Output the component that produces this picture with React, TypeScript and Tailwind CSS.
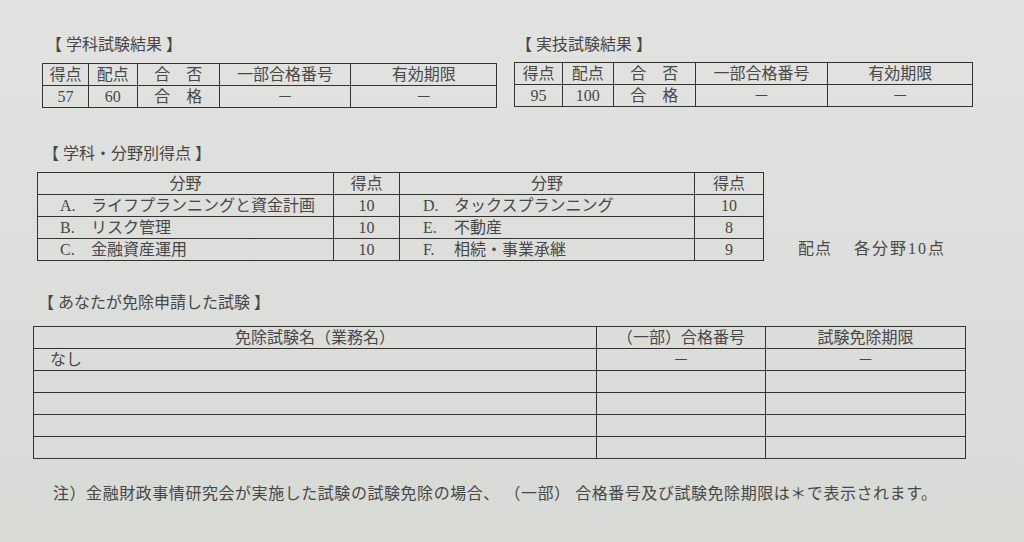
import React from 'react';

const LINE = 'border-[1.5px] border-[#333331]';

type ResultRow = { score: string; max: string };

function ResultTable({ widths, row }: { widths: number[]; row: ResultRow }) {
  const heads = ['得点', '配点', '合\u3000否', '一部合格番号', '有効期限'];
  const cells = [row.score, row.max, '合\u3000格', '－', '－'];
  return (
    <table className={`table-fixed border-collapse ${LINE}`}>
      <colgroup>
        {widths.map((w, i) => (
          <col key={i} style={{ width: w }} />
        ))}
      </colgroup>
      <tbody>
        <tr className="h-[22px]">
          {heads.map((h) => (
            <td key={h} className={`${LINE} p-0 text-center leading-none`}>{h}</td>
          ))}
        </tr>
        <tr className="h-[22px]">
          {cells.map((c, i) => (
            <td key={i} className={`${LINE} p-0 text-center leading-none`}>{c}</td>
          ))}
        </tr>
      </tbody>
    </table>
  );
}

const FIELDS = [
  ['A.', 'ライフプランニングと資金計画', '10', 'D.', 'タックスプランニング', '10'],
  ['B.', 'リスク管理', '10', 'E.', '不動産', '8'],
  ['C.', '金融資産運用', '10', 'F.', '相続・事業承継', '9'],
];

export default function App() {
  return (
    <div className="w-[1024px] h-[542px] overflow-hidden bg-gradient-to-b from-[#e2e3e0] to-[#d8dad6] text-[16px] text-[#474747] font-['Liberation_Serif','Noto_Sans_CJK_JP',serif]">
      {/* 学科 / 実技 results */}
      <div className="flex gap-[17px] pl-[42px] pt-[35px]">
        <section className="w-[455px]">
          <h2 className="h-[20px] pl-[4px] leading-[20px]">【 学科試験結果 】</h2>
          <div className="mt-[8px]">
            <ResultTable widths={[46, 49, 82, 132, 146]} row={{ score: '57', max: '60' }} />
          </div>
        </section>
        <section className="w-[459px]">
          <h2 className="h-[20px] pl-[2px] leading-[20px]">【 実技試験結果 】</h2>
          <div className="mt-[7px]">
            <ResultTable widths={[48, 51, 82, 133, 145]} row={{ score: '95', max: '100' }} />
          </div>
        </section>
      </div>

      {/* 分野別得点 */}
      <section className="mt-[36px] pl-[37px]">
        <h2 className="h-[20px] pl-[6px] leading-[20px]">【 学科・分野別得点 】</h2>
        <div className="mt-[8px] flex items-end">
          <table className={`table-fixed border-collapse ${LINE}`}>
            <colgroup>
              <col style={{ width: 296 }} />
              <col style={{ width: 66 }} />
              <col style={{ width: 295 }} />
              <col style={{ width: 69 }} />
            </colgroup>
            <tbody>
              <tr className="h-[22px]">
                <td className={`${LINE} p-0 text-center leading-none`}>分野</td>
                <td className={`${LINE} p-0 text-center leading-none`}>得点</td>
                <td className={`${LINE} p-0 text-center leading-none`}>分野</td>
                <td className={`${LINE} p-0 text-center leading-none`}>得点</td>
              </tr>
              {FIELDS.map((f) => (
                <tr key={f[0]} className="h-[22px]">
                  <td className={`${LINE} py-0 pl-[22px] leading-none whitespace-nowrap`}>
                    <span className="inline-block w-[31px]">{f[0]}</span>
                    {f[1]}
                  </td>
                  <td className={`${LINE} p-0 text-center leading-none`}>{f[2]}</td>
                  <td className={`${LINE} py-0 pl-[23px] leading-none whitespace-nowrap`}>
                    <span className="inline-block w-[31px]">{f[3]}</span>
                    {f[4]}
                  </td>
                  <td className={`${LINE} p-0 text-center leading-none`}>{f[5]}</td>
                </tr>
              ))}
            </tbody>
          </table>
          <p className="ml-[34px] mb-[2px] flex gap-[22px] leading-[20px]">
            <span className="tracking-[1px]">配点</span>
            <span className="tracking-[2px]">各分野10点</span>
          </p>
        </div>
      </section>

      {/* 免除申請 */}
      <section className="mt-[32px] pl-[33px]">
        <h2 className="h-[20px] pl-[5px] leading-[20px]">【 あなたが免除申請した試験 】</h2>
        <table className={`mt-[13px] table-fixed border-collapse ${LINE}`}>
          <colgroup>
            <col style={{ width: 563 }} />
            <col style={{ width: 169 }} />
            <col style={{ width: 200 }} />
          </colgroup>
          <tbody>
            <tr className="h-[22px]">
              <td className={`${LINE} p-0 text-center leading-none`}>免除試験名（業務名）</td>
              <td className={`${LINE} p-0 text-center leading-none`}>（一部）合格番号</td>
              <td className={`${LINE} p-0 text-center leading-none`}>試験免除期限</td>
            </tr>
            <tr className="h-[22px]">
              <td className={`${LINE} py-0 pl-[16px] leading-none`}>なし</td>
              <td className={`${LINE} p-0 text-center leading-none`}>－</td>
              <td className={`${LINE} p-0 text-center leading-none`}>－</td>
            </tr>
            {[0, 1, 2, 3].map((i) => (
              <tr key={i} className="h-[22px]">
                <td className={`${LINE} p-0`}></td>
                <td className={`${LINE} p-0`}></td>
                <td className={`${LINE} p-0`}></td>
              </tr>
            ))}
          </tbody>
        </table>
      </section>

      <p className="mt-[25px] pl-[53px] leading-[20px] tracking-[0.55px] whitespace-nowrap">
        注）金融財政事情研究会が実施した試験の試験免除の場合、 （一部） 合格番号及び試験免除期限は＊で表示されます。
      </p>
    </div>
  );
}
